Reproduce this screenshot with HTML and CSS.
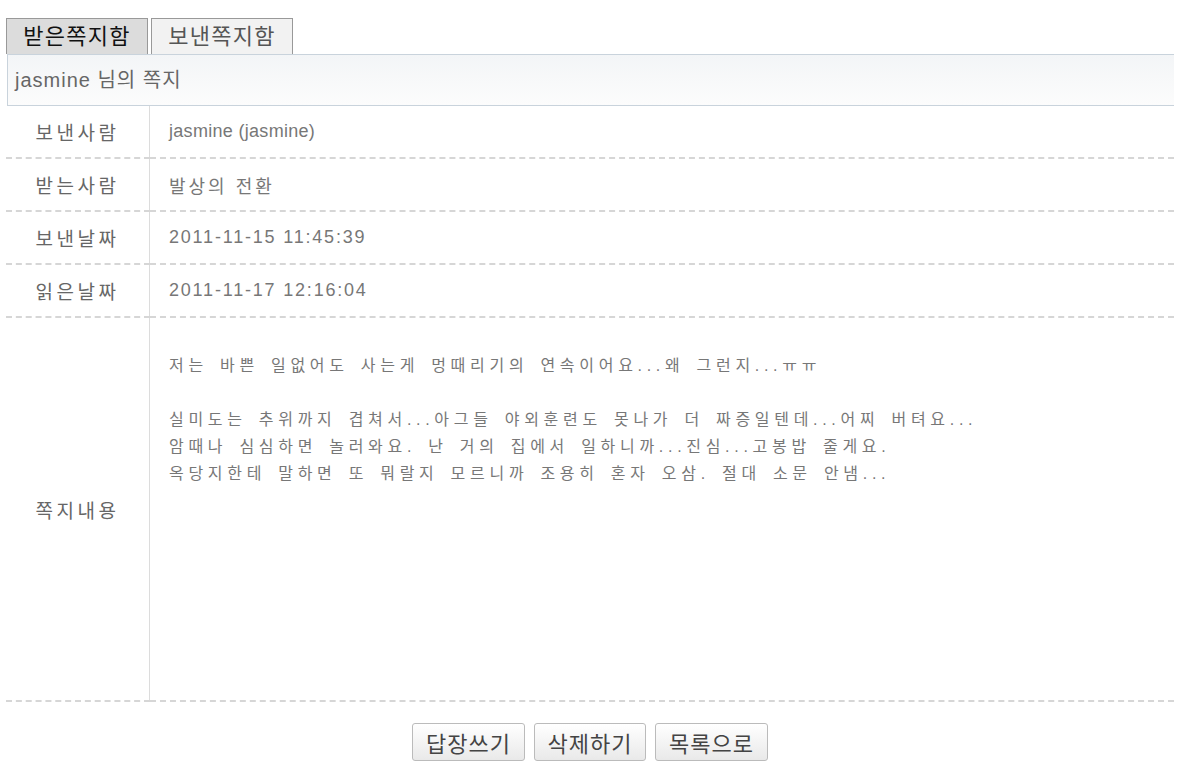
FILE: index.html
```html
<!DOCTYPE html>
<html lang="ko">

<head>
    <meta charset="UTF-8">
    <title>쪽지 보기</title>
    <link rel="stylesheet" href="styles.css">
</head>

<body>
    <div class="wrap">
        <div class="tabs">
            <a href="#" class="tab on">받은쪽지함</a>
            <a href="#" class="tab">보낸쪽지함</a>
        </div>

        <div class="msg-head">jasmine 님의 쪽지</div>

        <table class="msg-view">
            <tr>
                <th>보낸사람</th>
                <td class="name">jasmine (jasmine)</td>
            </tr>
            <tr>
                <th>받는사람</th>
                <td>발상의 전환</td>
            </tr>
            <tr>
                <th>보낸날짜</th>
                <td class="date">2011-11-15 11:45:39</td>
            </tr>
            <tr>
                <th>읽은날짜</th>
                <td class="date">2011-11-17 12:16:04</td>
            </tr>
            <tr class="body-row">
                <th>쪽지내용</th>
                <td class="memo">저는 바쁜 일없어도 사는게 멍때리기의 연속이어요...왜 그런지...ㅠㅠ<br>
                    <br>
                    실미도는 추위까지 겹쳐서...아그들 야외훈련도 못나가 더 짜증일텐데...어찌 버텨요...<br>
                    암때나 심심하면 놀러와요. 난 거의 집에서 일하니까...진심...고봉밥 줄게요.<br>
                    옥당지한테 말하면 또 뭐랄지 모르니까 조용히 혼자 오삼. 절대 소문 안냄...
                </td>
            </tr>
        </table>

        <div class="buttons">
            <button>답장쓰기</button>
            <button>삭제하기</button>
            <button>목록으로</button>
        </div>
    </div>
</body>

</html>
```

FILE: styles.css
```css
body {
    margin: 0;
    font-family: "Liberation Sans", "Noto Sans CJK KR", sans-serif;
    background: #fff;
}

.wrap {
    margin: 18px 7px 0 6px;
}

/* 쪽지함 탭 */
.tabs {
    display: flex;
    gap: 3px;
}

.tab {
    width: 140px;
    height: 35px;
    border: 1px solid #999;
    border-bottom: none;
    background: #f2f2f2;
    color: #555;
    font-size: 22px;
    letter-spacing: 1.3px;
    line-height: 35px;
    text-align: center;
    text-decoration: none;
}

.tab.on {
    background: #dcdcdc;
    color: #111;
}

.msg-head {
    margin-left: 1px;
    height: 50px;
    border: 1px solid #c9d3dc;
    border-right: none;
    background: linear-gradient(#f3f5f7, #fcfcfc);
    color: #666;
    font-size: 20px;
    letter-spacing: 1px;
    line-height: 50px;
    padding-left: 7px;
}

.msg-view {
    width: 100%;
    border-collapse: collapse;
}

.msg-view th,
.msg-view td {
    border-bottom: 2px dashed #d6d6d6;
    height: 51px;
    padding: 0;
}

.msg-view th {
    width: 143px;
    border-right: 1px solid #dcdcdc;
    color: #666;
    font-size: 19px;
    font-weight: normal;
    letter-spacing: 3.5px;
    text-align: center;
}

.msg-view td {
    padding-left: 19px;
    color: #777;
    font-size: 18px;
    letter-spacing: 3px;
}

.msg-view td.name {
    letter-spacing: 0.3px;
}

.msg-view td.date {
    letter-spacing: 1.8px;
}

.body-row th {
    height: 382px;
}

.msg-view td.memo {
    height: auto;
    vertical-align: top;
    padding-top: 34px;
    font-size: 16px;
    line-height: 27px;
    letter-spacing: 4.7px;
    word-spacing: 3px;
}

.buttons {
    text-align: center;
    padding-top: 21px;
}

button {
    height: 38px;
    margin: 0 2px;
    padding: 0 13px;
    border: 1px solid #bbb;
    border-radius: 3px;
    background: linear-gradient(#ffffff, #e9e9e9);
    color: #444;
    font-family: "Noto Sans CJK KR", sans-serif;
    font-size: 22px;
    letter-spacing: 1px;
    cursor: pointer;
}
```
